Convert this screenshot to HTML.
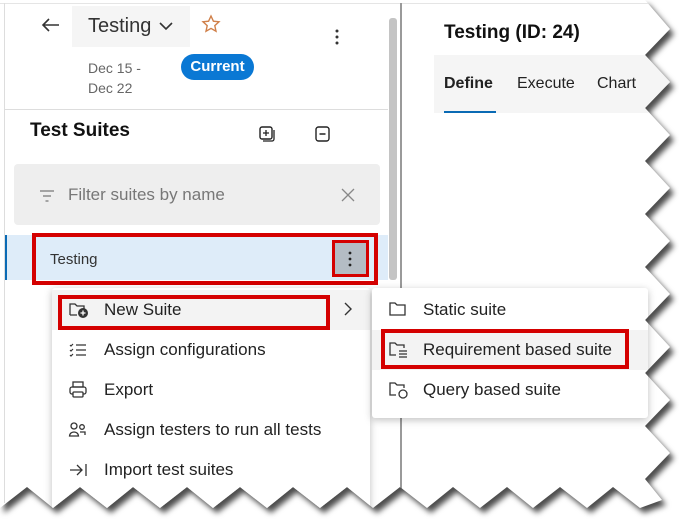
<!DOCTYPE html>
<html><head><style>
*{margin:0;padding:0;box-sizing:border-box}
body{width:679px;height:527px;background:#fff;position:relative;overflow:hidden;font-family:"Liberation Sans",sans-serif;color:#222}
.a{position:absolute;white-space:nowrap}
.red{position:absolute;border:4px solid #d40000}
#wrap{position:absolute;left:0;top:0;width:679px;height:527px;filter:drop-shadow(4px 5px 3px rgba(0,0,0,.7))}
#paper{position:absolute;left:0;top:0;width:679px;height:527px;background:#fff;
clip-path:polygon(0 0,645px 0,670px 29px,645px 55px,670px 82px,645px 108px,670px 135px,645px 161px,670px 188px,645px 214px,670px 241px,645px 267px,670px 294px,645px 320px,670px 347px,645px 373px,670px 400px,645px 426px,670px 453px,645px 479px,662px 500px,640px 508px,613px 487px,587px 508px,560px 487px,533px 508px,507px 487px,480px 508px,453px 487px,427px 508px,400px 487px,373px 508px,347px 487px,320px 508px,293px 487px,267px 508px,240px 487px,213px 508px,187px 487px,160px 508px,133px 487px,107px 508px,80px 487px,53px 508px,27px 487px,0 508px)}
</style></head><body>
<div id="wrap"><div id="paper">
<div class="a" style="left:0;top:3px;width:670px;height:1px;background:#e5e5e5"></div>
<div class="a" style="left:4px;top:3px;width:1px;height:500px;background:#ddd"></div>
<svg class="a" style="left:40px;top:16px" width="22" height="18"><path d="M19 9H3M9 3L3 9l6 6" stroke="#333" stroke-width="1.6" fill="none"/></svg>
<div class="a" style="left:72px;top:6px;width:118px;height:41px;background:#f5f5f5"></div>
<div class="a" style="left:88px;top:15px;font-size:20px;color:#333">Testing</div>
<svg class="a" style="left:158px;top:20px" width="16" height="12"><path d="M2 3l6 6 6-6" stroke="#333" stroke-width="1.6" fill="none"/></svg>
<svg class="a" style="left:201px;top:14px" width="20" height="20"><path d="M10 2l2.4 5.2 5.6.6-4.2 3.8 1.2 5.6L10 14.4 5 17.2l1.2-5.6L2 7.8l5.6-.6z" stroke="#d0804a" stroke-width="1.4" fill="none"/></svg>
<svg class="a" style="left:333px;top:28px" width="8" height="18"><circle cx="4" cy="3" r="1.5" fill="#333"/><circle cx="4" cy="9" r="1.5" fill="#333"/><circle cx="4" cy="15" r="1.5" fill="#333"/></svg>
<div class="a" style="left:88px;top:58px;font-size:14px;color:#666;line-height:20px">Dec 15 -<br>Dec 22</div>
<div class="a" style="left:181px;top:54px;width:73px;height:26px;background:#0a78d4;border-radius:13px;color:#fff;font-weight:bold;font-size:15px;text-align:center;line-height:26px">Current</div>
<div class="a" style="left:4px;top:109px;width:384px;height:1px;background:#ddd"></div>
<div class="a" style="left:30px;top:120px;font-size:19px;font-weight:bold;color:#111">Test Suites</div>
<svg class="a" style="left:258px;top:125px" width="18" height="18"><rect x="2" y="2" width="12" height="12" rx="2" stroke="#222" stroke-width="1.4" fill="none"/><path d="M5 8h6M8 5v6M16 5v9a2 2 0 0 1-2 2H5" stroke="#222" stroke-width="1.3" fill="none"/></svg>
<svg class="a" style="left:314px;top:125px" width="18" height="18"><rect x="2" y="2" width="13" height="14" rx="2.5" stroke="#222" stroke-width="1.4" fill="none"/><path d="M5.5 9h6" stroke="#222" stroke-width="1.4"/></svg>
<div class="a" style="left:14px;top:164px;width:366px;height:61px;background:#eeeeee;border-radius:4px"></div>
<svg class="a" style="left:38px;top:188px" width="18" height="16"><path d="M2 3h14M5 8h8M7.5 13h3" stroke="#777" stroke-width="1.3"/></svg>
<div class="a" style="left:68px;top:185px;font-size:17px;color:#777">Filter suites by name</div>
<svg class="a" style="left:340px;top:187px" width="16" height="16"><path d="M2 2l12 12M14 2L2 14" stroke="#888" stroke-width="1.3"/></svg>
<div class="a" style="left:5px;top:235px;width:383px;height:45px;background:#deecf9"></div>
<div class="a" style="left:5px;top:235px;width:2px;height:45px;background:#0a6ab4"></div>
<div class="a" style="left:50px;top:251px;font-size:15px;color:#333">Testing</div>
<div class="a" style="left:332px;top:241px;width:36px;height:35px;background:#b4bcc4"></div>
<svg class="a" style="left:346px;top:250px" width="8" height="18"><circle cx="4" cy="3" r="1.4" fill="#222"/><circle cx="4" cy="9" r="1.4" fill="#222"/><circle cx="4" cy="15" r="1.4" fill="#222"/></svg>
<div class="red" style="left:32px;top:233px;width:346px;height:52px"></div>
<div class="red" style="left:332px;top:240px;width:37px;height:37px;border-width:3px"></div>
<div class="a" style="left:389px;top:18px;width:8px;height:262px;background:#c4c4c4;border-radius:3px"></div>
<div class="a" style="left:400px;top:3px;width:2px;height:500px;background:#9a9a9a"></div>
<div class="a" style="left:444px;top:22px;font-size:19px;font-weight:bold;color:#111">Testing (ID: 24)</div>
<div class="a" style="left:434px;top:55px;width:240px;height:58px;background:#f5f5f5"></div>
<div class="a" style="left:444px;top:75px;font-size:16px;font-weight:bold;color:#222">Define</div>
<div class="a" style="left:517px;top:75px;font-size:16px;color:#222">Execute</div>
<div class="a" style="left:597px;top:75px;font-size:16px;color:#222">Chart</div>
<div class="a" style="left:444px;top:111px;width:52px;height:2px;background:#0a6ab4"></div>
<div class="a" style="left:52px;top:288px;width:318px;height:230px;background:#fff;box-shadow:0 2px 8px rgba(0,0,0,.25);border-radius:3px"></div>
<div class="a" style="left:52px;top:290px;width:318px;height:40px;background:#f3f3f3"></div>
<div class="red" style="left:58px;top:295px;width:272px;height:35px"></div>
<svg class="a" style="left:68px;top:300px" width="22" height="20"><path d="M2 15V4h5l2 2h7v3" stroke="#333" stroke-width="1.3" fill="none"/><path d="M2 15h7" stroke="#333" stroke-width="1.3"/><circle cx="15" cy="13" r="5" fill="#333"/><path d="M15 10.5v5M12.5 13h5" stroke="#fff" stroke-width="1.3"/></svg>
<div class="a" style="left:104px;top:300px;font-size:17px">New Suite</div>
<svg class="a" style="left:342px;top:301px" width="12" height="16"><path d="M3 2l6 6-6 6" stroke="#333" stroke-width="1.4" fill="none"/></svg>
<svg class="a" style="left:68px;top:341px" width="20" height="18"><path d="M2 4l1 1 2-2M2 9l1 1 2-2M2 14l1 1 2-2M8 4h10M8 9h10M8 14h10" stroke="#333" stroke-width="1.2" fill="none"/></svg>
<div class="a" style="left:104px;top:340px;font-size:17px">Assign configurations</div>
<svg class="a" style="left:68px;top:380px" width="20" height="20"><rect x="5" y="2" width="10" height="5" stroke="#333" stroke-width="1.3" fill="none"/><rect x="2" y="7" width="16" height="7" rx="2" stroke="#333" stroke-width="1.3" fill="none"/><rect x="5" y="12" width="10" height="5" rx="1" stroke="#333" stroke-width="1.3" fill="#fff"/></svg>
<div class="a" style="left:104px;top:380px;font-size:17px">Export</div>
<svg class="a" style="left:68px;top:420px" width="20" height="20"><circle cx="6" cy="6" r="3" stroke="#333" stroke-width="1.3" fill="none"/><circle cx="14" cy="7" r="2.3" stroke="#333" stroke-width="1.3" fill="none"/><path d="M1.5 16a4.5 4 0 0 1 9 0zM12 12h5v3" stroke="#333" stroke-width="1.3" fill="none"/></svg>
<div class="a" style="left:104px;top:420px;font-size:17px">Assign testers to run all tests</div>
<svg class="a" style="left:68px;top:461px" width="20" height="18"><path d="M2 9h12M9 4l5 5-5 5M18 3v12" stroke="#333" stroke-width="1.3" fill="none"/></svg>
<div class="a" style="left:104px;top:460px;font-size:17px">Import test suites</div>
<div class="a" style="left:372px;top:288px;width:276px;height:130px;background:#fff;box-shadow:0 2px 8px rgba(0,0,0,.25);border-radius:3px"></div>
<svg class="a" style="left:388px;top:300px" width="20" height="18"><path d="M2 15V3h5l2 2h8v10z" stroke="#333" stroke-width="1.3" fill="none"/></svg>
<div class="a" style="left:423px;top:300px;font-size:17px">Static suite</div>
<div class="a" style="left:372px;top:330px;width:276px;height:40px;background:#f3f3f3"></div>
<div class="red" style="left:381px;top:329px;width:248px;height:40px"></div>
<svg class="a" style="left:388px;top:340px" width="22" height="20"><path d="M8 15H2V3h5l2 2h7v3" stroke="#333" stroke-width="1.3" fill="none"/><path d="M11 11h8M11 14h8M11 17h8" stroke="#333" stroke-width="1.3"/></svg>
<div class="a" style="left:423px;top:340px;font-size:17px">Requirement based suite</div>
<svg class="a" style="left:388px;top:380px" width="22" height="20"><path d="M8 15H2V3h5l2 2h7v3" stroke="#333" stroke-width="1.3" fill="none"/><circle cx="15" cy="14" r="4" stroke="#333" stroke-width="1.3" fill="none"/></svg>
<div class="a" style="left:423px;top:380px;font-size:17px">Query based suite</div>
</div></div>
</body></html>
